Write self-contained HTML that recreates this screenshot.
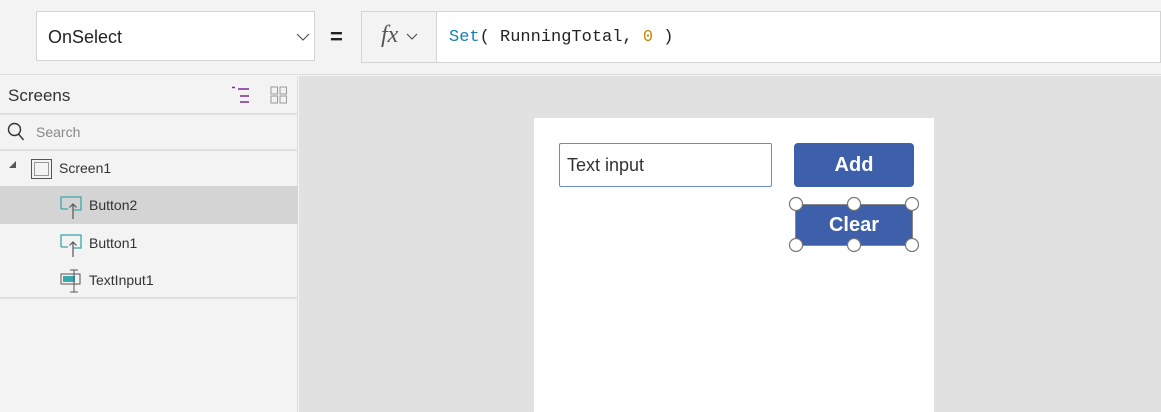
<!DOCTYPE html>
<html><head><style>
*{margin:0;padding:0;box-sizing:border-box}
body{width:1161px;height:412px;overflow:hidden;background:#f3f3f3;font-family:"Liberation Sans",sans-serif;position:relative}
.a{position:absolute}
</style></head><body>
<div class="a" style="left:0;top:0;width:1161px;height:75px;background:#f3f3f3;border-bottom:1px solid #ddd"></div>
<div class="a" style="left:36px;top:11px;width:279px;height:50px;background:#fff;border:1px solid #d4d4d4;font-size:18px;padding:15px 0 0 11px;color:#222">OnSelect</div>
<svg class="a" style="left:296px;top:32px" width="14" height="10"><path d="M1 2l6 6 6-6" stroke="#444" fill="none"/></svg>
<div class="a" style="left:330px;top:24px;font-size:22px;font-weight:bold;color:#222">=</div>
<div class="a" style="left:361px;top:11px;width:800px;height:52px;background:#fff;border:1px solid #d4d4d4"></div>
<div class="a" style="left:361px;top:11px;width:76px;height:52px;background:#f3f3f3;border:1px solid #d4d4d4;font-family:'Liberation Serif',serif;font-style:italic;font-size:24px;color:#555;padding:10px 0 0 19px">fx</div>
<svg class="a" style="left:406px;top:33px" width="12" height="8"><path d="M1 1l5 5 5-5" stroke="#444" fill="none"/></svg>
<div class="a" style="left:449px;top:28px;font-family:'Liberation Mono',monospace;font-size:17px;color:#222"><span style="color:#1a7db8">Set</span>( RunningTotal, <span style="color:#c68a00">0</span> )</div>
<div class="a" style="left:0;top:76px;width:298px;height:336px;background:#f3f3f3;border-right:1px solid #ddd"></div>
<div class="a" style="left:8px;top:86px;font-size:17px;color:#333">Screens</div>
<svg class="a" style="left:231px;top:86px" width="22" height="18"><path d="M1 1.5h3M7 3h11M9 10h9M9 16h9" stroke="#7a2b8f" stroke-width="1.6"/></svg>
<svg class="a" style="left:270px;top:86px" width="18" height="18" fill="none" stroke="#999"><rect x="1" y="1" width="6.5" height="7"/><rect x="10" y="1" width="6.5" height="7"/><rect x="1" y="10" width="6.5" height="7"/><rect x="10" y="10" width="6.5" height="7"/></svg>
<div class="a" style="left:0;top:113px;width:298px;height:2px;background:#e0e0e0"></div>
<svg class="a" style="left:7px;top:122px" width="18" height="20" fill="none" stroke="#333" stroke-width="1.4"><circle cx="7.5" cy="7.5" r="6"/><path d="M11.5 12l5 6"/></svg>
<div class="a" style="left:36px;top:124px;font-size:14px;color:#888">Search</div>
<div class="a" style="left:0;top:149px;width:298px;height:2px;background:#e0e0e0"></div>
<div class="a" style="left:9px;top:161px;width:0;height:0;border-left:7px solid transparent;border-bottom:7px solid #555"></div>
<div class="a" style="left:31px;top:159px;width:21px;height:20px;border:1px solid #555;box-shadow:inset 0 0 0 2px #f3f3f3,inset 0 0 0 3px #999"></div>
<div class="a" style="left:59px;top:160px;font-size:14px;color:#333">Screen1</div>
<div class="a" style="left:0;top:186px;width:298px;height:38px;background:#d4d4d4"></div>
<svg class="a" style="left:60px;top:196px" width="24" height="24" fill="none"><path d="M1 13V1h20v13h-8M8 13H1" stroke="#3aa8a8" stroke-width="1.3"/><path d="M13 8v15M9.5 11.5L13 8l3.5 3.5" stroke="#555" stroke-width="1.2"/></svg>
<div class="a" style="left:89px;top:197px;font-size:14px;color:#333">Button2</div>
<svg class="a" style="left:60px;top:234px" width="24" height="24" fill="none"><path d="M1 13V1h20v13h-8M8 13H1" stroke="#3aa8a8" stroke-width="1.3"/><path d="M13 8v15M9.5 11.5L13 8l3.5 3.5" stroke="#555" stroke-width="1.2"/></svg>
<div class="a" style="left:89px;top:235px;font-size:14px;color:#333">Button1</div>
<svg class="a" style="left:60px;top:268px" width="24" height="26" fill="none"><rect x="1" y="6" width="19" height="10" stroke="#555"/><rect x="3" y="8" width="12" height="6" fill="#3aa8a8"/><path d="M14 2v22M10 2h8M10 24h8" stroke="#555"/></svg>
<div class="a" style="left:89px;top:272px;font-size:14px;color:#333">TextInput1</div>
<div class="a" style="left:0;top:297px;width:298px;height:2px;background:#e0e0e0"></div>
<div class="a" style="left:299px;top:76px;width:862px;height:336px;background:#e1e1e1"></div>
<div class="a" style="left:534px;top:118px;width:400px;height:294px;background:#fff"></div>
<div class="a" style="left:559px;top:143px;width:213px;height:44px;border:1px solid #6b8ac7;border-radius:2px;background:#fff;font-size:18px;color:#333;padding:11px 0 0 7px">Text input</div>
<div class="a" style="left:794px;top:143px;width:120px;height:44px;background:#3e5fa9;border-radius:4px;color:#fff;font-size:20px;font-weight:bold;text-align:center;line-height:44px">Add</div>
<div class="a" style="left:795px;top:204px;width:118px;height:42px;background:#3e5fa9;border:1px solid #888;color:#fff;font-size:20px;font-weight:bold;text-align:center;line-height:40px">Clear</div>
<svg class="a" style="left:787px;top:196px" width="134" height="58" fill="#fff" stroke="#777" stroke-width="1.2"><circle cx="9" cy="8" r="6.5"/><circle cx="67" cy="8" r="6.5"/><circle cx="125" cy="8" r="6.5"/><circle cx="9" cy="49" r="6.5"/><circle cx="67" cy="49" r="6.5"/><circle cx="125" cy="49" r="6.5"/></svg>
</body></html>
